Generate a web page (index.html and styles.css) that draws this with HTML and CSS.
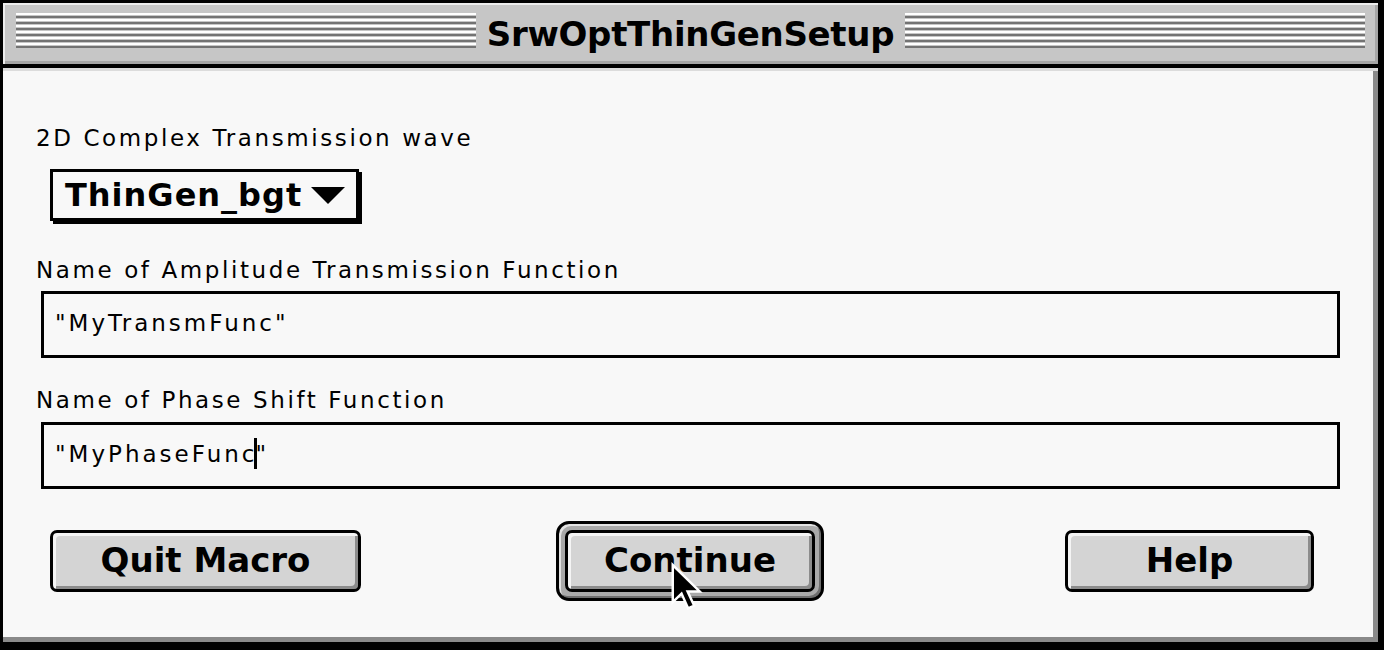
FILE: index.html
```html
<!DOCTYPE html>
<html lang="en">
<head>
<meta charset="utf-8">
<link rel="stylesheet" href="styles.css">
</head>
<body>
<div class="window">
    <div class="titlebar">
        <span class="stripes"></span>
        <span class="title">SrwOptThinGenSetup</span>
        <span class="stripes"></span>
    </div>
    <div class="dialog">
        <div class="label">2D Complex Transmission wave</div>
        <div class="popup"><span>ThinGen_bgt</span><i class="arrow"></i></div>
        <div class="label gap_big">Name of Amplitude Transmission Function</div>
        <div class="field">"MyTransmFunc"</div>
        <div class="label gap_mid">Name of Phase Shift Function</div>
        <div class="field second">"MyPhaseFunc<span class="caret"></span>"</div>
        <div class="buttons">
            <div class="btn quit">Quit Macro</div>
            <div class="ring"><div class="btn">Continue</div></div>
            <div class="btn help">Help</div>
        </div>
    </div>
    <svg class="cursor" width="33" height="50" viewBox="0 0 12 18">
        <path d="M1 1 L1 14.5 L4.2 11.4 L6.6 16.8 L8.8 15.8 L6.4 10.6 L10.8 10.6 Z" fill="#000" stroke="#fff" stroke-width="0.9" stroke-linejoin="miter"/>
    </svg>
</div>
</body>
</html>
```

FILE: styles.css
```css
body {margin:0; background:#000;}

.window {position:relative; width:1384px; height:650px; box-sizing:border-box; border-style:solid; border-color:#000; border-width:3px 6px 8px 3px; background:#f8f8f8; display:flex; flex-direction:column; font-family:"DejaVu Sans", "Liberation Sans", sans-serif; color:#000;}

.titlebar {height:65px; box-sizing:border-box; padding:10px 13px 0 13px; background:#c6c6c6; border-bottom:4px solid #000; box-shadow:inset 2px 2px 0 #ececec, inset -3px -3px 0 #a6a6a6; display:flex; align-items:flex-start;}
.stripes {flex:1; height:36px; background:repeating-linear-gradient(to bottom, #fff 0 2px, #c6c6c6 2px 3px, #737373 3px 5px, #c6c6c6 5px 6px);}
.title {padding:2px 11px 0; font-size:34px; line-height:38px; font-weight:bold; letter-spacing:-0.3px;}

.dialog {flex:1; padding:56px 0 0 33px; box-shadow:inset 0 3px 0 #dcdcdc, inset -5px -5px 0 #8a8a8a;}

.label {font-size:23px; line-height:28px; letter-spacing:2.6px;}
.gap_big {margin-top:35px;}
.gap_mid {margin-top:28px;}

.popup {margin:17px 0 0 14px; width:309px; height:52px; box-sizing:border-box; border:3px solid #000; box-shadow:3px 3px 0 #000; padding-left:12px; display:flex; align-items:center; font-size:32px; font-weight:bold; letter-spacing:1px;}
.arrow {margin-left:9px; width:0; height:0; border-left:17px solid transparent; border-right:17px solid transparent; border-top:17px solid #000;}

.field {margin:7px 0 0 5px; width:1299px; height:67px; box-sizing:border-box; border:3px solid #000; padding:0 0 4px 11px; display:flex; align-items:center; font-size:23px; letter-spacing:3px; white-space:pre;}
.field.second {margin-top:8px;}
.caret {display:inline-block; width:3px; height:31px; background:#000; margin:0 -2px 0 -3px;}

.buttons {margin:32px 0 0 14px; display:flex; align-items:center;}
.btn {height:62px; box-sizing:border-box; border:3px solid #000; border-radius:7px; background:#d4d4d4; box-shadow:inset 3px 3px 0 #f4f4f4, inset -3px -3px 0 #8c8c8c; display:flex; align-items:center; justify-content:center; padding-bottom:2px; font-size:34px; font-weight:bold;}
.quit {width:311px;}
.help {width:249px; margin-left:241px;}
.ring {margin-left:195px; width:268px; height:80px; box-sizing:border-box; border:3px solid #000; border-radius:13px; padding:6px; background:#a9a9a9; box-shadow:inset 2px 2px 0 #e2e2e2, inset -2px -2px 0 #6e6e6e;}

.cursor {position:absolute; left:667px; top:559px;}
```
